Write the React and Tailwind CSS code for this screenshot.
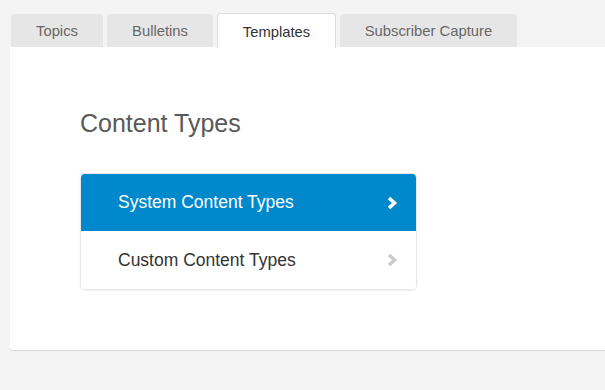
import React from "react";

function Chevron({ className }) {
  return (
    <svg width="12" height="14" viewBox="0 0 12 14" className={className}>
      <path d="M3 2 L8.5 7 L3 12" fill="none" stroke="currentColor" strokeWidth="3.6" strokeLinejoin="miter" />
    </svg>
  );
}

export default function App() {
  const tabs = [
    { label: "Topics", w: "w-[92px]" },
    { label: "Bulletins", w: "w-[106px]" },
    { label: "Templates", w: "w-[119px]", active: true },
    { label: "Subscriber Capture", w: "w-[177px]" },
  ];
  return (
    <div className="w-[605px] h-[390px] overflow-hidden bg-[#f4f4f4] pt-[13px] pl-[10px]" style={{ fontFamily: '"Liberation Sans", Arial, sans-serif' }}>
      <div className="flex items-end gap-[4px] pl-[1px] h-[34px]">
        {tabs.map((t) =>
          t.active ? (
            <div key={t.label} className={`${t.w} h-[35px] -mb-px pt-[2px] relative z-10 bg-white border border-[#dcdcdc] border-b-0 rounded-t-[4px] flex items-center justify-center text-[14.8px] text-[#333]`}>
              {t.label}
            </div>
          ) : (
            <div key={t.label} className={`${t.w} h-[33px] pt-[2px] bg-[#e6e6e6] rounded-t-[4px] flex items-center justify-center text-[14.8px] text-[#666]`}>
              {t.label}
            </div>
          )
        )}
      </div>
      <div className="bg-white w-[620px] h-[303px] rounded-bl-[3px] shadow-[0_1px_1px_rgba(0,0,0,0.12)] pt-[61px] pl-[70px]">
        <h2 className="text-[25px] leading-[30px] text-[#595959]">Content Types</h2>
        <div className="mt-[35px] w-[337px] rounded-[5px] border border-[#e8e8e8] shadow-[0_1px_2px_rgba(0,0,0,0.07)] overflow-hidden">
          <div className="h-[57px] bg-[#0088cc] flex items-center justify-between pl-[37px] pr-[18px] text-white text-[17.5px]">
            <span>System Content Types</span>
            <Chevron className="text-white" />
          </div>
          <div className="h-[58px] bg-white flex items-center justify-between pl-[37px] pr-[18px] text-[#333] text-[17.5px]">
            <span>Custom Content Types</span>
            <Chevron className="text-[#cccccc]" />
          </div>
        </div>
      </div>
    </div>
  );
}
